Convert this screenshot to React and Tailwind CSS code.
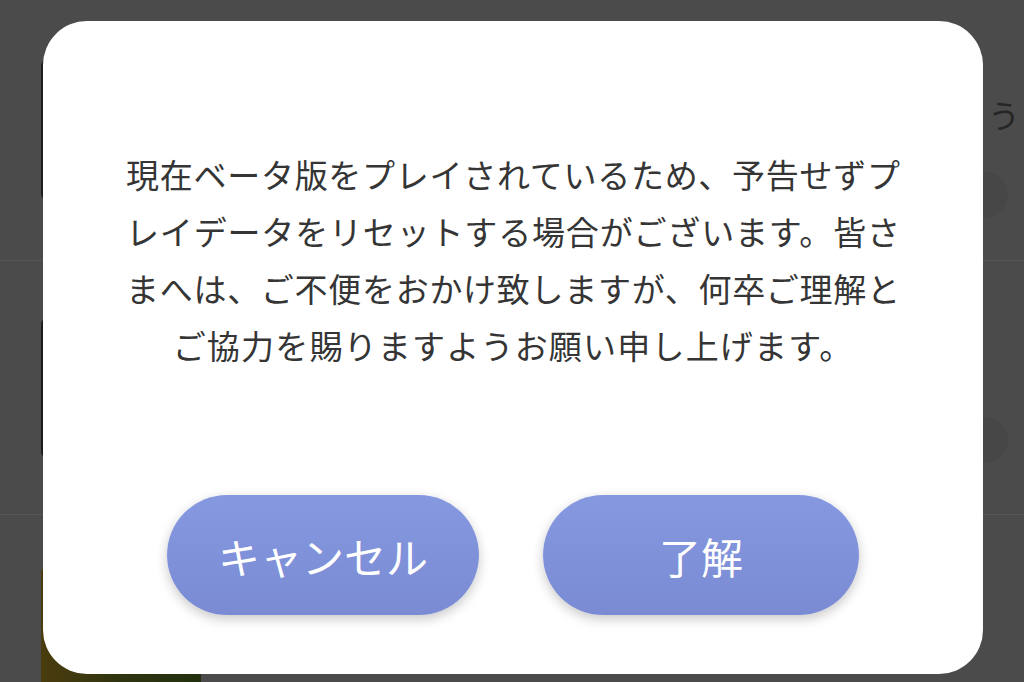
import React from 'react';

const FONT = { fontFamily: '"Noto Sans CJK JP", "Noto Sans", sans-serif' };

function Row({ children, thumb, className = '' }) {
  return (
    <div className={`relative flex items-center pl-[41px] border-b border-[#565656] ${className}`}>
      <div className={`w-[160px] h-[140px] rounded-[6px] ${thumb}`} />
      {children}
    </div>
  );
}

export default function App() {
  return (
    <div className="relative w-[1024px] h-[682px] overflow-hidden bg-[#4b4b4b]" style={FONT}>
      {/* dimmed page behind the dialog */}
      <div className="flex flex-col">
        <Row thumb="bg-[#1e1e1e]" className="h-[261px]">
          <div className="flex-1 self-start flex flex-col items-end pt-[92px] gap-[36px]">
            <span className="text-[32px] leading-[44px] text-[#262626] mr-[4px]">ましょう</span>
            <div className="w-[46px] h-[46px] rounded-full bg-[#474747] mr-[16px]" />
          </div>
        </Row>
        <Row thumb="bg-[#1c1c1c]" className="h-[254px]">
          <div className="flex-1 flex justify-end">
            <div className="w-[46px] h-[46px] rounded-full bg-[#474747] mt-[104px] mr-[16px]" />
          </div>
        </Row>
        <div className="flex pl-[41px] pt-[52px] h-[167px]">
          <div className="w-[160px] h-[140px] rounded-[6px] bg-gradient-to-r from-[#4a3c0e] via-[#2f3410] to-[#22300f]" />
        </div>
      </div>

      {/* dialog */}
      <div className="absolute left-[43px] top-[21px] w-[940px] h-[653px] rounded-[44px] bg-white flex flex-col items-center pt-[125px]">
        <div className="w-[774px] text-[33px] leading-[57px] text-[#353535]">
          <p className="text-justify [text-align-last:justify]">現在ベータ版をプレイされているため、予告せずプ</p>
          <p className="text-justify [text-align-last:justify]">レイデータをリセットする場合がございます。皆さ</p>
          <p className="text-justify [text-align-last:justify]">まへは、ご不便をおかけ致しますが、何卒ご理解と</p>
          <p className="text-center tracking-[1.2px]">ご協力を賜りますようお願い申し上げます。</p>
        </div>

        <div className="flex gap-[64px] mt-[121px]">
          <button className="w-[312px] h-[120px] rounded-full bg-gradient-to-b from-[#8598e0] to-[#7a8bd3] text-white text-[42px] shadow-[0_4px_12px_rgba(0,0,0,0.22)]">
            キャンセル
          </button>
          <button className="w-[316px] h-[120px] rounded-full bg-gradient-to-b from-[#8598e0] to-[#7a8bd3] text-white text-[42px] shadow-[0_4px_12px_rgba(0,0,0,0.22)]">
            了解
          </button>
        </div>
      </div>
    </div>
  );
}
